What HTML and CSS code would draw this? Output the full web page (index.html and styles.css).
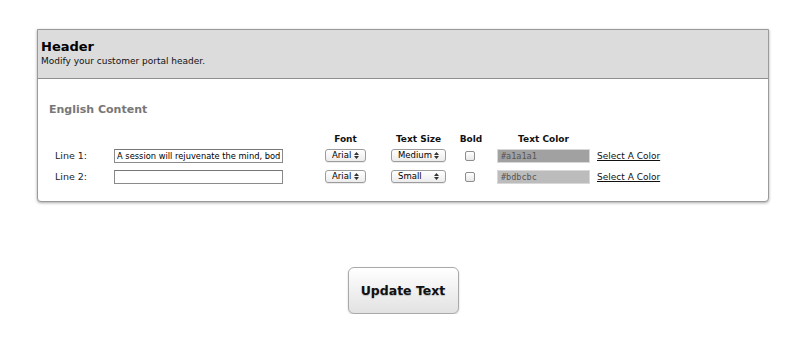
FILE: index.html
```html
<!DOCTYPE html>
<html lang="en">
<head>
<meta charset="UTF-8" />
<meta name="viewport" content="width=device-width, initial-scale=1.0" />
<title>Customer Portal Header</title>
<link rel="stylesheet" href="styles.css">
</head>
<body>

<div class="panel">
  <div class="panel-head">
    <h2>Header</h2>
    <p>Modify your customer portal header.</p>
  </div>
  <div class="panel-body">
    <h3>English Content</h3>
    <div class="line-grid">
      <span></span>
      <span></span>
      <span class="col-head w-font">Font</span>
      <span class="col-head w-size">Text Size</span>
      <span class="col-head w-bold">Bold</span>
      <span class="col-head w-color">Text Color</span>
      <span></span>

      <label class="line-label">Line 1:</label>
      <input class="line-text" type="text" value="A session will rejuvenate the mind, body">
      <span class="select-wrap w-font">
        <select><option>Arial</option></select>
        <svg class="arrows" width="5" height="7" viewBox="0 0 5 7"><path d="M0 3L2.5 0L5 3Z M0 4L2.5 7L5 4Z" fill="#333"/></svg>
      </span>
      <span class="select-wrap w-size">
        <select><option>Medium</option></select>
        <svg class="arrows" width="5" height="7" viewBox="0 0 5 7"><path d="M0 3L2.5 0L5 3Z M0 4L2.5 7L5 4Z" fill="#333"/></svg>
      </span>
      <input class="bold-box" type="checkbox">
      <input class="color-text c1" type="text" value="#a1a1a1" readonly>
      <a href="#" class="pick">Select A Color</a>

      <label class="line-label">Line 2:</label>
      <input class="line-text" type="text" value="">
      <span class="select-wrap w-font">
        <select><option>Arial</option></select>
        <svg class="arrows" width="5" height="7" viewBox="0 0 5 7"><path d="M0 3L2.5 0L5 3Z M0 4L2.5 7L5 4Z" fill="#333"/></svg>
      </span>
      <span class="select-wrap w-size">
        <select><option>Small</option></select>
        <svg class="arrows" width="5" height="7" viewBox="0 0 5 7"><path d="M0 3L2.5 0L5 3Z M0 4L2.5 7L5 4Z" fill="#333"/></svg>
      </span>
      <input class="bold-box" type="checkbox">
      <input class="color-text c2" type="text" value="#bdbcbc" readonly>
      <a href="#" class="pick">Select A Color</a>
    </div>
  </div>
</div>

<div class="actions">
  <button class="update-btn">Update Text</button>
</div>

</body>
</html>
```

FILE: styles.css
```css
body {
  margin: 0;
  padding-top: 29px;
  background: #fff;
  font-family: "DejaVu Sans", Verdana, sans-serif;
  font-size: 10px;
  color: #111;
}
.panel {
  width: 732px;
  box-sizing: border-box;
  margin: 0 auto;
  border: 1px solid #9a9a9a;
  border-radius: 0 0 4px 4px;
  box-shadow: 0 1px 3px rgba(0, 0, 0, 0.35);
  background: #fff;
}
.panel-head {
  background: #dcdcdc;
  border-bottom: 1px solid #8f8f8f;
  padding: 9px 3px 10px;
}
.panel-head h2 {
  margin: 0;
  font-size: 13px;
  line-height: 16px;
  font-weight: bold;
  color: #000;
}
.panel-head p {
  margin: 0;
  font-size: 9px;
  line-height: 13px;
  color: #111;
}
.panel-body {
  padding: 24px 11px 14px;
}
.panel-body h3 {
  margin: 0;
  font-size: 11px;
  line-height: 14px;
  color: #777;
}
.line-grid {
  margin: 16px 0 0 6px;
  display: grid;
  grid-template-columns: 59px 211px 66px 75px 31px 100px auto;
  grid-template-rows: 12px;
  grid-auto-rows: 21px;
  align-items: center;
}
.col-head {
  display: flex;
  justify-content: center;
  white-space: nowrap;
  font-weight: bold;
  font-size: 9px;
  line-height: 12px;
}
.w-font { width: 41px; }
.w-size { width: 55px; }
.w-bold { width: 10px; }
.w-color { width: 93px; }
.line-label {
  font-size: 9.5px;
  color: #222;
}
.line-text {
  width: 169px;
  height: 14px;
  box-sizing: border-box;
  margin: 0;
  padding: 0 2px;
  border: 1px solid #8a8a8a;
  border-top-color: #777;
  font-family: "DejaVu Sans", Verdana, sans-serif;
  font-size: 8.3px;
  color: #000;
  outline: none;
}
.select-wrap {
  position: relative;
  display: block;
  height: 13px;
}
.select-wrap select {
  appearance: none;
  -webkit-appearance: none;
  width: 100%;
  height: 13px;
  box-sizing: border-box;
  margin: 0;
  padding: 0 0 0 6px;
  border: 1px solid #9c9c9c;
  border-radius: 3px;
  background: linear-gradient(#ffffff, #ececec);
  box-shadow: 0 1px 0 rgba(0, 0, 0, 0.08);
  font-family: "DejaVu Sans", Verdana, sans-serif;
  font-size: 8.5px;
  line-height: 11px;
  color: #000;
}
.arrows {
  position: absolute;
  right: 7px;
  top: 3px;
  pointer-events: none;
}
.bold-box {
  appearance: none;
  -webkit-appearance: none;
  width: 10px;
  height: 10px;
  margin: 0 0 0 -1px;
  border: 1px solid #8d8d8d;
  border-radius: 2px;
  background: linear-gradient(#ffffff, #e8e8e8);
}
.color-text {
  width: 93px;
  height: 14px;
  box-sizing: border-box;
  margin: 0;
  padding: 0 3px;
  border: 1px solid #d8d8d8;
  font-family: "DejaVu Sans Mono", monospace;
  font-size: 8.5px;
  color: #555;
  outline: none;
}
.c1 { background: #a1a1a1; }
.c2 { background: #bdbcbc; }
.pick {
  font-size: 9px;
  color: #111;
  text-decoration: underline;
  white-space: nowrap;
}
.actions {
  display: flex;
  justify-content: center;
  margin-top: 65px;
}
.update-btn {
  position: relative;
  width: 111px;
  height: 47px;
  border: 1px solid #a9a9a9;
  border-radius: 6px;
  background: linear-gradient(#ffffff, #e2e2e2);
  box-shadow: 0 1px 2px rgba(0, 0, 0, 0.2);
  font-family: "DejaVu Sans", Verdana, sans-serif;
  font-size: 12.5px;
  font-weight: bold;
  color: #111;
  text-shadow: 0 1px 1px rgba(0, 0, 0, 0.2);
  cursor: pointer;
}
.update-btn::after {
  content: "";
  position: absolute;
  left: -1px;
  right: -1px;
  top: 47px;
  height: 24px;
  border-radius: 0 0 6px 6px;
  background: linear-gradient(rgba(0, 0, 0, 0.08), rgba(0, 0, 0, 0));
}
```
